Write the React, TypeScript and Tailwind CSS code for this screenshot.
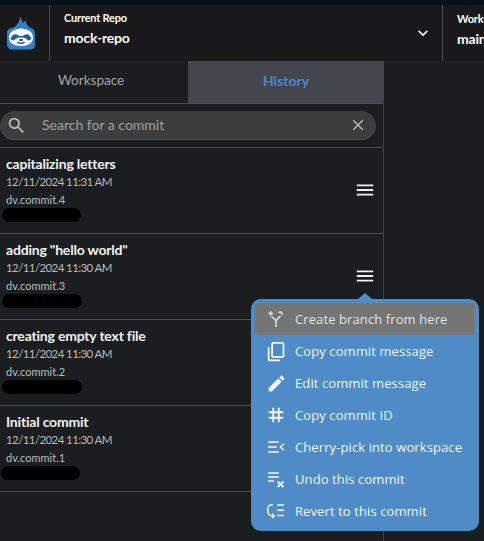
import React from 'react';
import { MdClose, MdContentCopy, MdEdit, MdKeyboardArrowDown, MdMenu, MdSearch, MdTag } from 'react-icons/md';

const commits = [
  { title: 'capitalizing letters', date: '12/11/2024 11:31 AM', id: 'dv.commit.4', pill: 'ml-[2px] w-[79px]' },
  { title: 'adding "hello world"', date: '12/11/2024 11:30 AM', id: 'dv.commit.3', pill: 'ml-[2px] w-[80px]', open: true },
  { title: 'creating empty text file', date: '12/11/2024 11:30 AM', id: 'dv.commit.2', pill: 'ml-[2px] w-[80px]' },
  { title: 'Initial commit', date: '12/11/2024 11:30 AM', id: 'dv.commit.1', pill: 'ml-[1px] w-[79px]' },
];

const BranchIcon = () => (
  <svg width="18" height="18" viewBox="0 0 18 18" fill="none" stroke="currentColor" strokeWidth="1.5">
    <path d="M9 17V10.5L4.5 6.5M9 10.5L13.5 6" />
    <path d="M11.5 2.5L14.5 2L15 5" />
    <path d="M1.5 3.5H6M3.75 1.2V5.8" />
  </svg>
);

const CherryIcon = () => (
  <svg width="18" height="18" viewBox="0 0 18 18" fill="none" stroke="currentColor" strokeWidth="1.5">
    <path d="M1 4H12M1 9H10M1 14H12" />
    <path d="M17 5.5L13.5 9L17 12.5" />
  </svg>
);

const UndoIcon = () => (
  <svg width="18" height="18" viewBox="0 0 18 18" fill="none" stroke="currentColor" strokeWidth="1.5">
    <path d="M1 3H12M1 7H12M1 11H7" />
    <path d="M10.5 11.5L16.5 17M16.5 11.5L10.5 17" strokeWidth="1.8" />
  </svg>
);

const RevertIcon = () => (
  <svg width="18" height="18" viewBox="0 0 18 18" fill="none" stroke="currentColor" strokeWidth="1.5">
    <path d="M6 2.8H4.5A3.6 3.6 0 0 0 1 6.5V10A3.6 3.6 0 0 0 4.5 13.7H7" />
    <path d="M5 11.5L7.5 13.7L5 16" />
    <path d="M10 3H17M10 8.2H17M10 13.5H17" />
  </svg>
);

const menuItems = [
  { label: 'Create branch from here', icon: <BranchIcon />, active: true },
  { label: 'Copy commit message', icon: <MdContentCopy size={21} className="scale-x-[-1] rotate-180" /> },
  { label: 'Edit commit message', icon: <MdEdit size={21} /> },
  { label: 'Copy commit ID', icon: <MdTag size={22} /> },
  { label: 'Cherry-pick into workspace', icon: <CherryIcon /> },
  { label: 'Undo this commit', icon: <UndoIcon /> },
  { label: 'Revert to this commit', icon: <RevertIcon /> },
];

const Logo = () => (
  <svg width="30" height="34" viewBox="0 0 30 34">
    <path d="M1 17C1 14 3 12.500 6 12C10 11 13 7 14.500 0.500C15.500 4 16.500 6 17.500 7C18.500 6 19 5 19.500 4C20 8 22 11 25 12C28 13 29 15 29 18V28C29 31.500 27 33.500 24 33.500H6C3 33.500 1 31.500 1 28Z" fill="#2f7fc9" />
    <path d="M3 22C3 16 8 12.500 15 12.500C22 12.500 27 16 27 22C27 27 22 30 15 30C8 30 3 27 3 22Z" fill="#fff" />
    <path d="M4.500 22.500C6 19 8.500 17.500 10.500 18.500C12 19.300 13 20 15 20C17 20 18 19.300 19.500 18.500C21.500 17.500 24 19 25.500 22.500C24 25 21.500 25 20.500 23C19 21.500 17 21.500 15 21.500C13 21.500 11 21.500 9.500 23C8.500 25 6 25 4.500 22.500Z" fill="#1d5fa3" />
    <path d="M11.500 26C13 27.800 17 27.800 18.500 26" stroke="#1d5fa3" strokeWidth="1.500" fill="none" />
    <rect x="13" y="23" width="4" height="2" rx="1" fill="#1d5fa3" />
  </svg>
);

export default function App() {
  return (
    <div className="relative flex h-[541px] w-[484px] flex-col overflow-hidden bg-[#1b1e20] font-['Lato',sans-serif] text-white">
      <div className="h-[5px] shrink-0 bg-[#07141c]" />
      <header className="flex h-[56px] shrink-0 bg-[#19191b]">
        <div className="w-[50px] shrink-0 border-r border-[#4a4a4a] pl-[6px] pt-[11px]">
          <Logo />
        </div>
        <div className="flex w-[393px] shrink-0 items-center justify-between border-r border-[#4a4a4a] pl-[14px] pr-[9px]">
          <div className="pb-[9px]">
            <div className="text-[11px] leading-[14px] font-bold tracking-[-0.2px]">Current Repo</div>
            <div className="mt-[5px] text-[14px] leading-[16px] font-bold tracking-[-0.2px]">mock-repo</div>
          </div>
          <MdKeyboardArrowDown size={20} />
        </div>
        <div className="pl-[14px] pt-[7px]">
          <div className="whitespace-nowrap text-[11px] leading-[14px] font-bold tracking-[-0.2px]">Workspace</div>
          <div className="mt-[5px] text-[14px] leading-[16px] font-bold tracking-[-0.2px]">main</div>
        </div>
      </header>

      <div className="flex h-[42px] w-[384px] shrink-0 text-[14px]">
        <div className="flex w-[188px] items-center justify-center pb-[3px] pr-[6px] text-[13.5px] text-[#a3a5a8]">Workspace</div>
        <div className="flex flex-1 items-center justify-center bg-[#43464f] pb-[3px] font-bold text-[#4a86cf]">History</div>
      </div>

      <section className="flex w-[384px] flex-1 flex-col border-r border-[#3f4042]">
        <div className="h-[44px] shrink-0 border-t border-[#4a4b4d] pt-[7px] pr-[7px]">
          <div className="flex h-[29px] items-center rounded-full border-b border-[#4f5051] bg-[#3c3d3d] pl-[6px] pr-[9px]">
            <MdSearch size={21} className="text-[#b9bbbc]" />
            <span className="ml-[15px] flex-1 pb-[2px] text-[14px] text-[#9ea1a4]">Search for a commit</span>
            <MdClose size={18} className="text-[#b4b5b6]" />
          </div>
        </div>
        {commits.map((c) => (
          <div key={c.id} className="flex h-[86px] shrink-0 items-start justify-between border-t border-[#4a4b4d] pr-[7px] pt-[7px]">
            <div className="min-w-0">
              <div className="pl-[6px] text-[14px] leading-[18px] font-bold tracking-[-0.2px] text-[#f2f2f2]">{c.title}</div>
              <div className="mt-[1px] pl-[6px] text-[11.5px] leading-[16px] tracking-[-0.6px] text-[#b9babb]">{c.date}</div>
              <div className="mt-[2px] pl-[6px] text-[11px] leading-[15px] text-[#b9babb]">{c.id}</div>
              <div className={`mt-[1px] h-[14px] rounded-full bg-black ${c.pill}`} />
            </div>
            <MdMenu size={22} className="mt-[-9px] self-center text-[#f0f0f0]" />
          </div>
        ))}
        <div className="border-t border-[#4a4b4d]" />
      </section>

      <div className="absolute left-[251px] top-[299px] w-[228px] rounded-[10px] bg-[#4f8cc7] p-[4px] font-['Open_Sans',sans-serif] text-[13px] text-[#f3f6fa]">
        <div className="absolute left-[107px] top-[-6px] h-0 w-0 border-x-[7px] border-b-[6px] border-x-transparent border-b-[#4f8cc7]" />
        {menuItems.map((item) => (
          <div
            key={item.label}
            className={`flex h-[32px] items-center rounded-[4px] ${item.active ? 'bg-[#757575] text-[#dfe3e8]' : ''}`}
          >
            <span className="flex w-[40px] shrink-0 items-center justify-center pl-[2px]">{item.icon}</span>
            <span className="whitespace-nowrap pt-[1px] tracking-[0.1px]">{item.label}</span>
          </div>
        ))}
      </div>
    </div>
  );
}
